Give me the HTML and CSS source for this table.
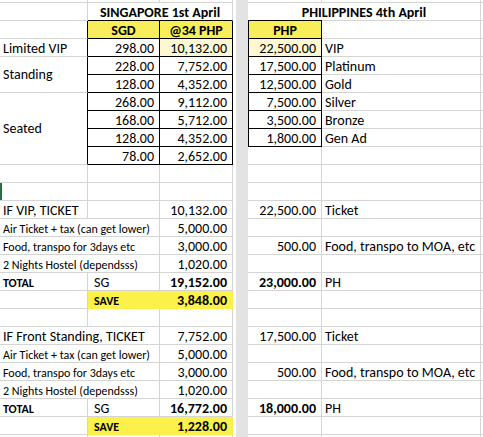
FILE: index.html
```html
<!DOCTYPE html>
<html>
<head>
<meta charset="utf-8">
<link rel="stylesheet" href="styles.css">
</head>
<body>
<div class="sheet">
  <div class="gap"></div>

  <!-- row 0 -->
  <div class="c"></div><div class="c"></div><div class="c"></div><div class="c"></div><div class="c"></div><div class="c"></div>

  <!-- row 1 -->
  <div class="c"></div>
  <div class="c b ctr s2 kb">SINGAPORE 1st April</div>
  <div class="c b ctr s2 title-ph">PHILIPPINES 4th April</div>
  <div class="c"></div>

  <!-- row 2 -->
  <div class="c kr"></div>
  <div class="c b ctr k hy">SGD</div>
  <div class="c b ctr k hy">@34 PHP</div>
  <div class="c b ctr ke hy">PHP</div>
  <div class="c"></div>
  <div class="c"></div>

  <!-- row 3 -->
  <div class="c kr">Limited VIP</div>
  <div class="c n k">298.00</div>
  <div class="c n k ly">10,132.00</div>
  <div class="c n ke ly">22,500.00</div>
  <div class="c">VIP</div>
  <div class="c"></div>

  <!-- row 4 -->
  <div class="c kr mid r2">Standing</div>
  <div class="c n k">228.00</div>
  <div class="c n k">7,752.00</div>
  <div class="c n ke">17,500.00</div>
  <div class="c">Platinum</div>
  <div class="c"></div>

  <!-- row 5 -->
  <div class="c n k">128.00</div>
  <div class="c n k">4,352.00</div>
  <div class="c n ke">12,500.00</div>
  <div class="c">Gold</div>
  <div class="c"></div>

  <!-- row 6 -->
  <div class="c kr mid r4">Seated</div>
  <div class="c n k">268.00</div>
  <div class="c n k">9,112.00</div>
  <div class="c n ke">7,500.00</div>
  <div class="c">Silver</div>
  <div class="c"></div>

  <!-- row 7 -->
  <div class="c n k">168.00</div>
  <div class="c n k">5,712.00</div>
  <div class="c n ke">3,500.00</div>
  <div class="c">Bronze</div>
  <div class="c"></div>

  <!-- row 8 -->
  <div class="c n k">128.00</div>
  <div class="c n k">4,352.00</div>
  <div class="c n ke">1,800.00</div>
  <div class="c">Gen Ad</div>
  <div class="c"></div>

  <!-- row 9 -->
  <div class="c n k">78.00</div>
  <div class="c n k">2,652.00</div>
  <div class="c"></div>
  <div class="c"></div>
  <div class="c"></div>

  <!-- row 10 -->
  <div class="c"></div><div class="c"></div><div class="c"></div><div class="c"></div><div class="c"></div><div class="c"></div>

  <!-- row 11 -->
  <div class="c sel"></div><div class="c"></div><div class="c"></div><div class="c"></div><div class="c"></div><div class="c"></div>

  <!-- row 12 -->
  <div class="c">IF VIP, TICKET</div>
  <div class="c"></div>
  <div class="c n">10,132.00</div>
  <div class="c n">22,500.00</div>
  <div class="c">Ticket</div>
  <div class="c"></div>

  <!-- row 13 -->
  <div class="c s2 sm">Air Ticket + tax (can get lower)</div>
  <div class="c n">5,000.00</div>
  <div class="c"></div>
  <div class="c"></div>
  <div class="c"></div>

  <!-- row 14 -->
  <div class="c s2 sm">Food, transpo for 3days etc</div>
  <div class="c n">3,000.00</div>
  <div class="c n">500.00</div>
  <div class="c">Food, transpo to MOA, etc</div>
  <div class="c"></div>

  <!-- row 15 -->
  <div class="c s2 sm">2 Nights Hostel (dependsss)</div>
  <div class="c n">1,020.00</div>
  <div class="c"></div>
  <div class="c"></div>
  <div class="c"></div>

  <!-- row 16 -->
  <div class="c sm b">TOTAL</div>
  <div class="c ind">SG</div>
  <div class="c n b">19,152.00</div>
  <div class="c n b">23,000.00</div>
  <div class="c">PH</div>
  <div class="c"></div>

  <!-- row 17 -->
  <div class="c"></div>
  <div class="c ind b sm sy">SAVE</div>
  <div class="c n b sy">3,848.00</div>
  <div class="c"></div>
  <div class="c"></div>
  <div class="c"></div>

  <!-- row 18 -->
  <div class="c"></div><div class="c"></div><div class="c"></div><div class="c"></div><div class="c"></div><div class="c"></div>

  <!-- row 19 -->
  <div class="c s2">IF Front Standing, TICKET</div>
  <div class="c n">7,752.00</div>
  <div class="c n">17,500.00</div>
  <div class="c">Ticket</div>
  <div class="c"></div>

  <!-- row 20 -->
  <div class="c s2 sm">Air Ticket + tax (can get lower)</div>
  <div class="c n">5,000.00</div>
  <div class="c"></div>
  <div class="c"></div>
  <div class="c"></div>

  <!-- row 21 -->
  <div class="c s2 sm">Food, transpo for 3days etc</div>
  <div class="c n">3,000.00</div>
  <div class="c n">500.00</div>
  <div class="c">Food, transpo to MOA, etc</div>
  <div class="c"></div>

  <!-- row 22 -->
  <div class="c s2 sm">2 Nights Hostel (dependsss)</div>
  <div class="c n">1,020.00</div>
  <div class="c"></div>
  <div class="c"></div>
  <div class="c"></div>

  <!-- row 23 -->
  <div class="c sm b">TOTAL</div>
  <div class="c ind">SG</div>
  <div class="c n b">16,772.00</div>
  <div class="c n b">18,000.00</div>
  <div class="c">PH</div>
  <div class="c"></div>

  <!-- row 24 -->
  <div class="c"></div>
  <div class="c ind b sm sy">SAVE</div>
  <div class="c n b sy">1,228.00</div>
  <div class="c"></div>
  <div class="c"></div>
  <div class="c"></div>

  <!-- row 25 -->
  <div class="c"></div><div class="c"></div><div class="c"></div><div class="c"></div><div class="c"></div><div class="c"></div>
</div>
</body>
</html>
```

FILE: styles.css
```css
html, body {
  margin: 0;
  padding: 0;
  background: #fff;
}

.sheet {
  display: grid;
  grid-template-columns: 88px 72px 73px 15px 74px 159px 1fr;
  grid-template-rows: 3px repeat(25, 18px);
  width: 483px;
  height: 437px;
  overflow: hidden;
  font-family: Carlito, Calibri, Lato, sans-serif;
  font-size: 14px;
  color: #000;
}

.c {
  box-sizing: border-box;
  border-right: 1px solid #d4d4d4;
  border-bottom: 1px solid #d4d4d4;
  padding: 2px 3px 0 3px;
  line-height: 16px;
  white-space: nowrap;
  overflow: visible;
  min-width: 0;
}

.gap {
  grid-column: 4;
  grid-row: 1 / -1;
  background: linear-gradient(to right, #fff 3px, #e3e3e3 3px);
}

.s2 { grid-column: span 2; }
.r2 { grid-row: span 2; }
.r4 { grid-row: span 4; }

.mid {
  display: flex;
  align-items: center;
  padding-top: 1px;
}

.n {
  text-align: right;
  padding-right: 5px;
}

.b { font-weight: bold; }
.ctr { text-align: center; }
.sm { font-size: 12px; }
.ind { padding-left: 6px; }

.k {
  border-right-color: #000;
  border-bottom-color: #000;
}

.ke {
  border-left: 1px solid #000;
  border-right-color: #000;
  border-bottom-color: #000;
}

.kr { border-right-color: #000; }
.kb { border-bottom-color: #000; }

.title-ph {
  border-bottom: none;
  background-image: linear-gradient(#000, #000), linear-gradient(#d4d4d4, #d4d4d4);
  background-size: 74px 1px, 100% 1px;
  background-position: left bottom, left bottom;
  background-repeat: no-repeat;
}

.hy { background: #f8ed5b; }
.ly { background: #fdf7d2; }

.sy {
  background: #fbf14a;
  border-right-color: #fbf14a;
  border-bottom-color: #fbf14a;
}

.sel { box-shadow: inset 2px 0 0 #217346; }
```
